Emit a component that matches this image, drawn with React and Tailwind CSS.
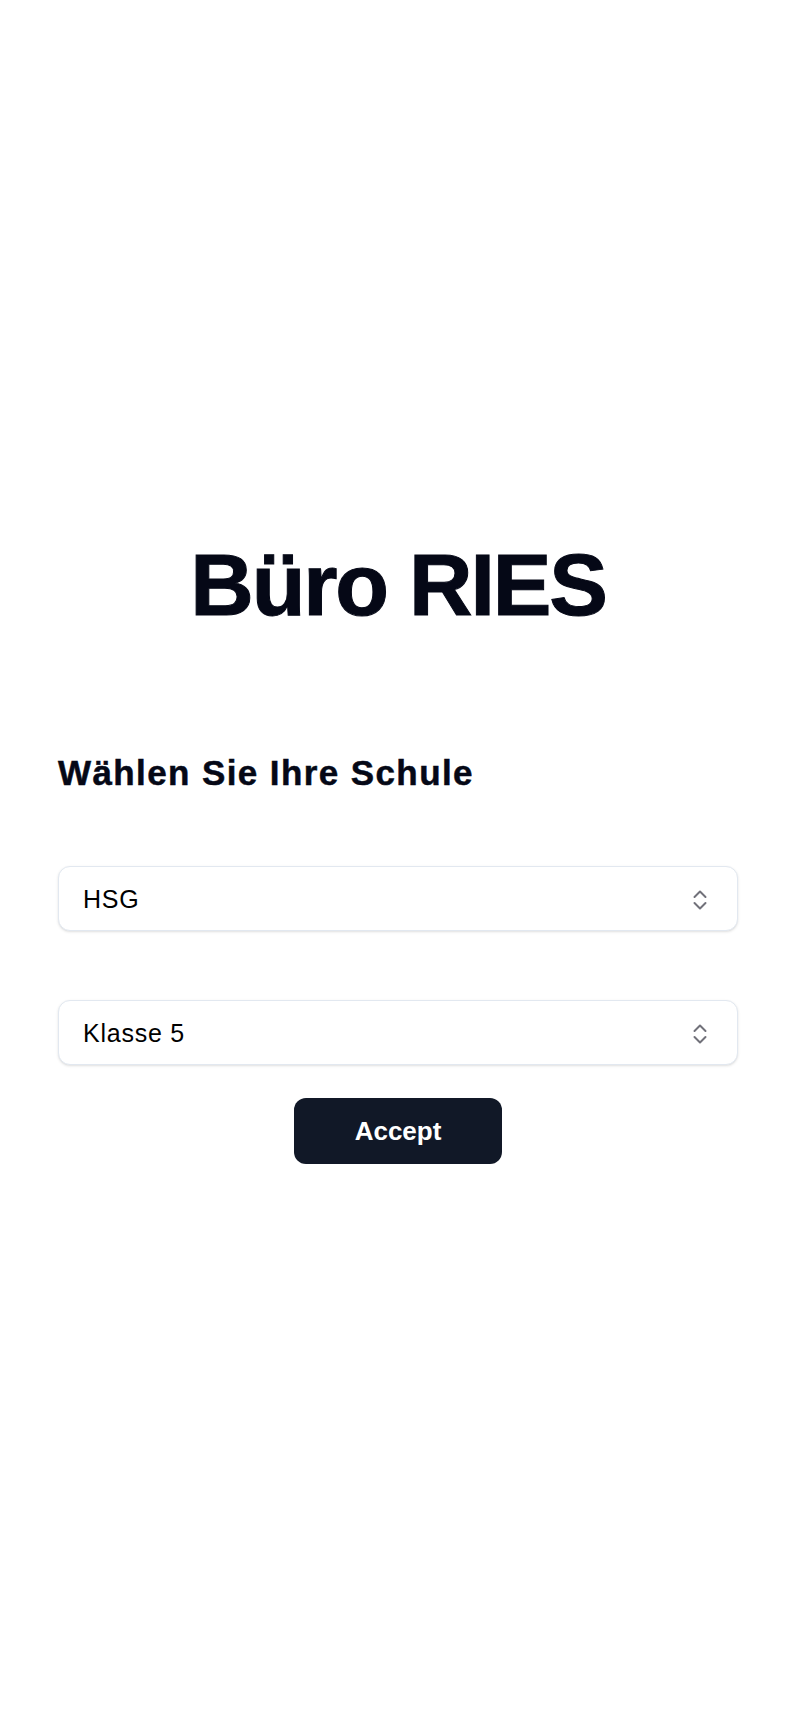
import React, { useState } from "react";

// 위/아래 화살표 아이콘
function UpDownIcon() {
  return (
    <svg width="14" height="22" viewBox="0 0 14 22" fill="none" stroke="#71717a" strokeWidth="2" strokeLinecap="round" strokeLinejoin="round">
      <path d="M1.5 8 L7 2.5 L12.5 8" />
      <path d="M1.5 14 L7 19.5 L12.5 14" />
    </svg>
  );
}

function SelectBox({ value }) {
  return (
    <div className="h-[65px] w-full flex items-center justify-between pl-6 pr-[30px] pt-[3px] bg-white border border-slate-200 rounded-xl shadow-sm">
      <span className="text-[25px] tracking-[0.03em] text-black">{value}</span>
      <UpDownIcon />
    </div>
  );
}

export default function App() {
  const [school] = useState("HSG");
  const [klasse] = useState("Klasse 5");

  return (
    <div className="min-h-[1732px] bg-white font-['Liberation_Sans',Arial,sans-serif] text-gray-950">
      <div className="pt-[541px] px-[58px]">
        {/* 1. 제목 */}
        <h1 className="text-[88px] leading-none font-bold text-center tracking-[-0.025em] text-[#050816] [-webkit-text-stroke:1px_#050816]">
          Büro RIES
        </h1>

        {/* 2. 학교 선택 */}
        <h2 className="mt-[126px] text-[35px] leading-none font-bold tracking-[0.04em] text-[#050816] [-webkit-text-stroke:0.5px_#050816]">
          Wählen Sie Ihre Schule
        </h2>

        <div className="mt-[76px]">
          <SelectBox value={school} />
        </div>
        <div className="mt-[69px]">
          <SelectBox value={klasse} />
        </div>

        <div className="mt-[33px] flex justify-center">
          <button className="w-[208px] h-[66px] rounded-xl bg-[#111827] text-white text-[26px] font-bold">
            Accept
          </button>
        </div>
      </div>
    </div>
  );
}
